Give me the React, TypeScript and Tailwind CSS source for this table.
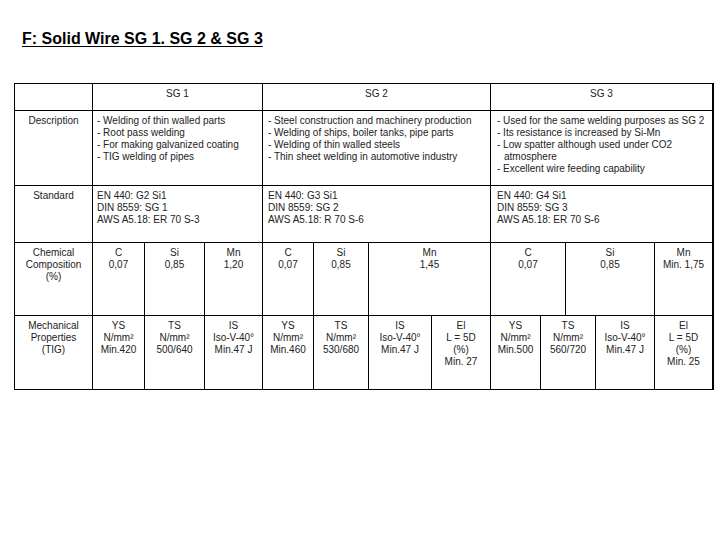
import React from "react";

// column tracks between the 1px grid lines (x: 14 92 144 204 262 313 368 431 490 540 565 595 654 712)
const cols =
  "grid-cols-[77px_51px_59px_57px_50px_54px_62px_58px_49px_24px_29px_58px_57px]";
// row tracks between the lines (y: 83 110 185 242 315 389)
const rows = "grid-rows-[26px_74px_56px_72px_73px]";

type CellProps = {
  span?: string;
  align?: "center" | "left";
  pad?: string;
  lines: React.ReactNode[];
};

function Cell({ span = "", align = "center", pad = "", lines }: CellProps) {
  return (
    <div
      className={`bg-white pt-[4px] whitespace-nowrap ${span} ${
        align === "center" ? "text-center" : "text-left"
      } ${pad}`}
    >
      {lines.map((l, i) => (
        <div key={i}>{l}</div>
      ))}
    </div>
  );
}

export default function App() {
  return (
    <div className="w-[720px] h-[540px] bg-white pt-[30px] font-['Liberation_Sans',Arial,sans-serif] text-black">
      <div className="pl-[22px] text-[16px] leading-[18px] font-bold">
        <span className="underline underline-offset-[2px]">F: Solid Wire SG 1. SG 2 &amp; SG 3</span>
      </div>

      <div
        className={`mt-[35px] ml-[14px] w-max grid ${cols} ${rows} gap-px bg-black pl-px pt-px pb-px pr-[2px] text-[10px] leading-[12px] text-[#222]`}
      >
        {/* header */}
        <Cell lines={[""]} />
        <Cell span="col-span-3" lines={["SG 1"]} />
        <Cell span="col-span-4" lines={["SG 2"]} />
        <Cell span="col-span-5" lines={["SG 3"]} />

        {/* description */}
        <Cell lines={["Description"]} />
        <Cell
          span="col-span-3"
          align="left"
          pad="pl-[4px]"
          lines={[
            "- Welding of thin walled parts",
            "- Root pass welding",
            "- For making galvanized coating",
            "- TIG welding of pipes",
          ]}
        />
        <Cell
          span="col-span-4"
          align="left"
          pad="pl-[5px]"
          lines={[
            "- Steel construction and machinery production",
            "- Welding of ships, boiler tanks, pipe parts",
            "- Welding of thin walled steels",
            "- Thin sheet welding in automotive industry",
          ]}
        />
        <Cell
          span="col-span-5"
          align="left"
          pad="pl-[6px]"
          lines={[
            "- Used for the same welding purposes as SG 2",
            "- Its resistance is increased by Si-Mn",
            "- Low spatter although used under CO2",
            <span className="ml-[7px]">atmosphere</span>,
            "- Excellent wire feeding capability",
          ]}
        />

        {/* standard */}
        <Cell lines={["Standard"]} />
        <Cell
          span="col-span-3"
          align="left"
          pad="pl-[4px]"
          lines={["EN 440: G2 Si1", "DIN 8559: SG 1", "AWS A5.18: ER 70 S-3"]}
        />
        <Cell
          span="col-span-4"
          align="left"
          pad="pl-[5px]"
          lines={["EN 440: G3 Si1", "DIN 8559: SG 2", "AWS A5.18: R 70 S-6"]}
        />
        <Cell
          span="col-span-5"
          align="left"
          pad="pl-[6px]"
          lines={["EN 440: G4 Si1", "DIN 8559: SG 3", "AWS A5.18: ER 70 S-6"]}
        />

        {/* chemical composition */}
        <Cell lines={["Chemical", "Composition", "(%)"]} />
        <Cell lines={["C", "0,07"]} />
        <Cell lines={["Si", "0,85"]} />
        <Cell lines={["Mn", "1,20"]} />
        <Cell lines={["C", "0,07"]} />
        <Cell lines={["Si", "0,85"]} />
        <Cell span="col-span-2" lines={["Mn", "1,45"]} />
        <Cell span="col-span-2" lines={["C", "0,07"]} />
        <Cell span="col-span-2" lines={["Si", "0,85"]} />
        <Cell lines={["Mn", "Min. 1,75"]} />

        {/* mechanical properties */}
        <Cell lines={["Mechanical", "Properties", "(TIG)"]} />
        <Cell lines={["YS", "N/mm²", "Min.420"]} />
        <Cell lines={["TS", "N/mm²", "500/640"]} />
        <Cell lines={["IS", "Iso-V-40°", "Min.47 J"]} />
        <Cell lines={["YS", "N/mm²", "Min.460"]} />
        <Cell lines={["TS", "N/mm²", "530/680"]} />
        <Cell lines={["IS", "Iso-V-40°", "Min.47 J"]} />
        <Cell lines={["El", "L = 5D", "(%)", "Min. 27"]} />
        <Cell lines={["YS", "N/mm²", "Min.500"]} />
        <Cell span="col-span-2" lines={["TS", "N/mm²", "560/720"]} />
        <Cell lines={["IS", "Iso-V-40°", "Min.47 J"]} />
        <Cell lines={["El", "L = 5D", "(%)", "Min. 25"]} />
      </div>
    </div>
  );
}
